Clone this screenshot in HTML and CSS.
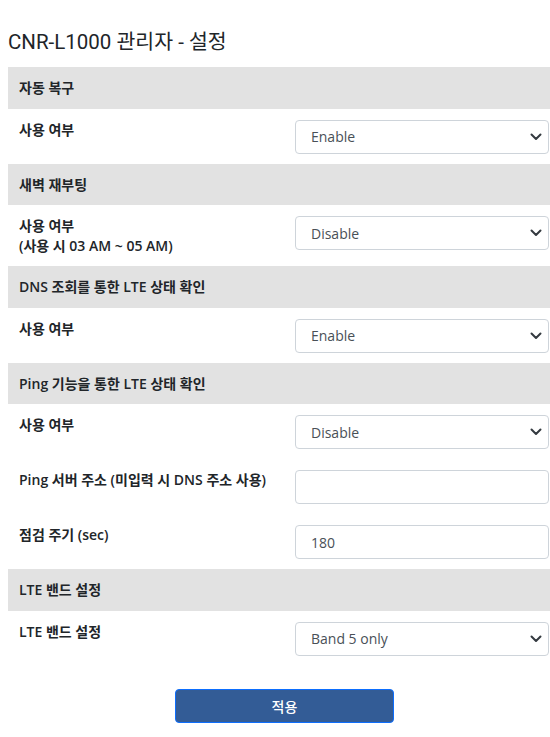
FILE: index.html
```html
<!DOCTYPE html>
<html lang="ko">
<head>
<meta charset="utf-8">
<title>CNR-L1000 관리자 - 설정</title>
<link rel="stylesheet" href="styles.css">
</head>
<body>
<div class="page">
  <h1 class="title">CNR-L1000 관리자 - 설정</h1>

  <div class="section-head">자동 복구</div>
  <div class="row">
    <div class="label">사용 여부</div>
    <div class="control select">Enable<svg class="chev" viewBox="0 0 12 8"><path d="M1.5 1.5L6 6l4.5-4.5"/></svg></div>
  </div>

  <div class="section-head">새벽 재부팅</div>
  <div class="row">
    <div class="label">사용 여부<br>(사용 시 03 AM ~ 05 AM)</div>
    <div class="control select">Disable<svg class="chev" viewBox="0 0 12 8"><path d="M1.5 1.5L6 6l4.5-4.5"/></svg></div>
  </div>

  <div class="section-head">DNS 조회를 통한 LTE 상태 확인</div>
  <div class="row">
    <div class="label">사용 여부</div>
    <div class="control select">Enable<svg class="chev" viewBox="0 0 12 8"><path d="M1.5 1.5L6 6l4.5-4.5"/></svg></div>
  </div>

  <div class="section-head">Ping 기능을 통한 LTE 상태 확인</div>
  <div class="row">
    <div class="label">사용 여부</div>
    <div class="control select">Disable<svg class="chev" viewBox="0 0 12 8"><path d="M1.5 1.5L6 6l4.5-4.5"/></svg></div>
  </div>
  <div class="row">
    <div class="label">Ping 서버 주소 (미입력 시 DNS 주소 사용)</div>
    <div class="control input"></div>
  </div>
  <div class="row">
    <div class="label">점검 주기 (sec)</div>
    <div class="control input">180</div>
  </div>

  <div class="section-head">LTE 밴드 설정</div>
  <div class="row">
    <div class="label">LTE 밴드 설정</div>
    <div class="control select">Band 5 only<svg class="chev" viewBox="0 0 12 8"><path d="M1.5 1.5L6 6l4.5-4.5"/></svg></div>
  </div>

  <div class="actions">
    <button class="apply" type="button">적용</button>
  </div>
</div>
</body>
</html>
```

FILE: styles.css
```css
html, body {
  margin: 0;
  padding: 0;
  background: #ffffff;
  overflow: hidden;
}

body {
  font-family: "Open Sans", "Noto Sans CJK KR", sans-serif;
  color: #212529;
  font-size: 14px;
}

.page {
  width: 542px;
  margin-left: 8px;
}

.title {
  font-family: Roboto, "Noto Sans CJK KR", sans-serif;
  font-size: 20.5px;
  font-weight: 400;
  line-height: 24px;
  margin: 0;
  padding: 30px 0 13px;
  color: #212529;
}

.section-head {
  background: #e2e2e2;
  padding: 10px 11px;
  line-height: 21.5px;
  font-weight: 600;
  font-size: 14px;
}

.row {
  display: grid;
  grid-template-columns: 287px 254px;
  padding: 11px 0 10px;
  align-items: start;
}

.label {
  padding-left: 11px;
  line-height: 20px;
  font-weight: 600;
}

.control {
  box-sizing: border-box;
  height: 34px;
  border: 1px solid #ced4da;
  border-radius: 4px;
  display: flex;
  align-items: center;
  padding: 0 6px 0 15px;
  color: #495057;
  font-size: 14px;
}

.select {
  justify-content: space-between;
}

.chev {
  width: 12px;
  height: 8px;
  fill: none;
  stroke: #343a40;
  stroke-width: 2;
  stroke-linecap: round;
  stroke-linejoin: round;
}

.actions {
  padding: 23px 0 0 167px;
}

.apply {
  width: 219px;
  height: 34px;
  background: #335c96;
  border: 1px solid #0d6efd;
  border-radius: 4px;
  color: #ffffff;
  font-family: "Open Sans", "Noto Sans CJK KR", sans-serif;
  font-size: 14px;
  font-weight: 500;
  padding: 0;
}
```
